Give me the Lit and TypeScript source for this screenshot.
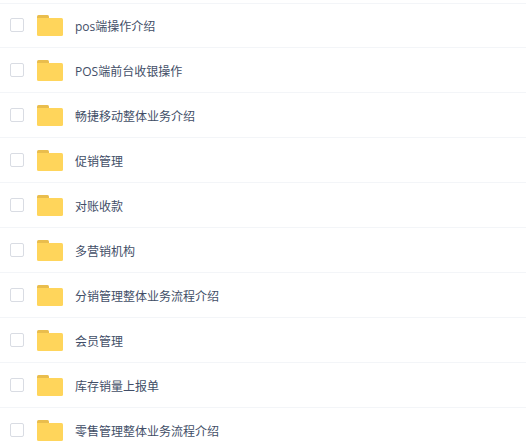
import { LitElement, html, css } from "lit";
import { customElement } from "lit/decorators.js";

const FOLDERS = [
  "pos端操作介绍",
  "POS端前台收银操作",
  "畅捷移动整体业务介绍",
  "促销管理",
  "对账收款",
  "多营销机构",
  "分销管理整体业务流程介绍",
  "会员管理",
  "库存销量上报单",
  "零售管理整体业务流程介绍",
];

@customElement("app-root")
export class AppRoot extends LitElement {
  static styles = css`
    :host {
      display: block;
      padding-top: 3px;
      height: 100vh;
      box-sizing: border-box;
      overflow: hidden;
      background: #fff;
      color: #424e67;
      font: 12px/20px "Open Sans", "Noto Sans CJK SC", sans-serif;
    }
    .list {
      list-style: none;
      margin: 0;
      padding: 0;
      box-shadow: inset 0 1px #f3f5f8;
    }
    .row {
      display: flex;
      align-items: center;
      box-sizing: border-box;
      min-height: 45px;
      padding: 0 10px;
      border-bottom: 1px solid #f3f5f8;
    }
    .check {
      appearance: none;
      flex: none;
      width: 14px;
      height: 14px;
      margin: 0 13px 0 0;
      border: 1px solid #d9dce3;
      border-radius: 2px;
      background: #fff;
    }
    .check:checked {
      background: #06a7ff;
      border-color: #06a7ff;
    }
    .name {
      display: flex;
      align-items: center;
      gap: 12px;
      padding-top: 1px;
    }
    .title {
      padding-top: 2px;
    }
    .folder {
      flex: none;
      width: 26px;
      height: 21px;
    }
  `;

  render() {
    return html`<ul class="list">
      ${FOLDERS.map(
        (name, i) => html`<li class="row">
          <input class="check" type="checkbox" id="folder-${i}" />
          <label class="name" for="folder-${i}">
            <svg class="folder" viewBox="0 0 26 21" aria-hidden="true">
              <path d="M0 6V1.5Q0 0 1.5 0H10.5Q12 0 12 1.5V6Z" fill="#e9bd4d" />
              <path d="M0 3H24.5Q26 3 26 4.5V19.5Q26 21 24.5 21H1.5Q0 21 0 19.5Z" fill="#ffd55b" />
            </svg>
            <span class="title">${name}</span>
          </label>
        </li>`
      )}
    </ul>`;
  }
}
